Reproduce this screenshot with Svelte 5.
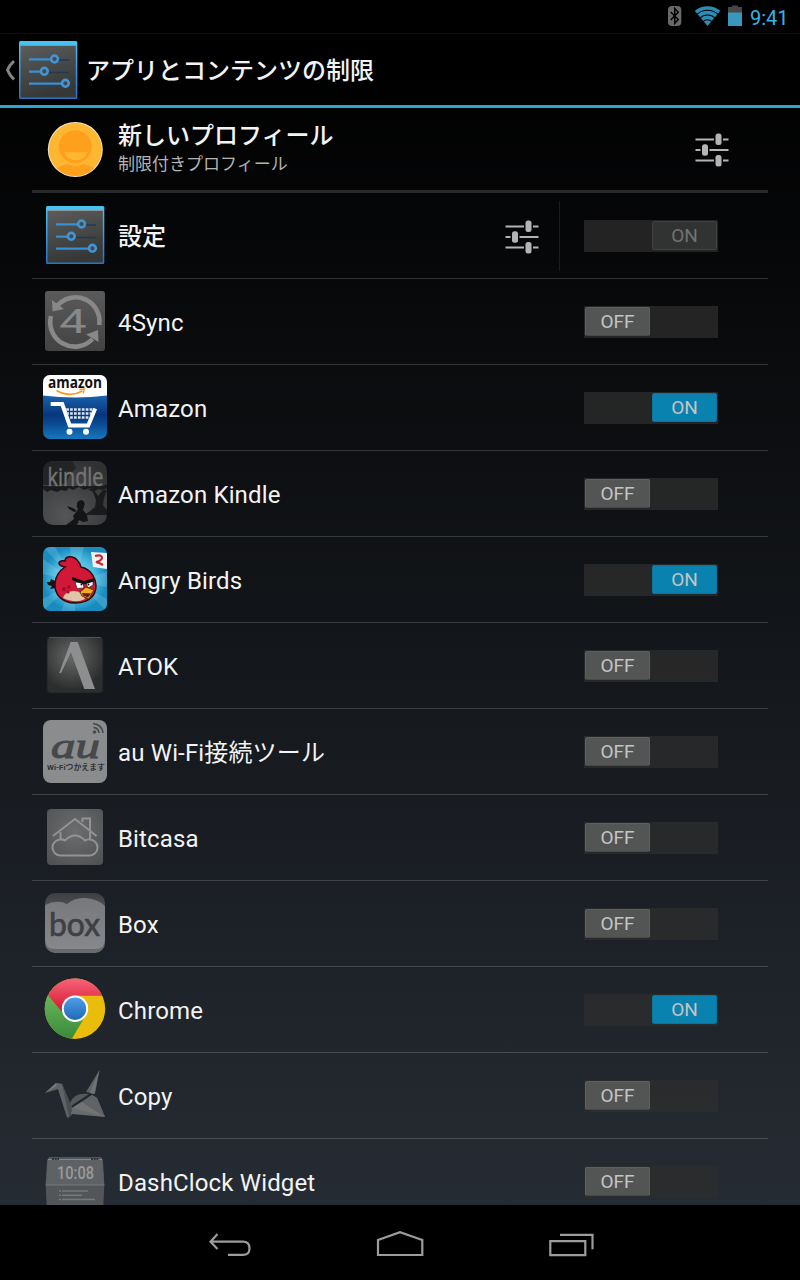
<script>
  let profileName = '新しいプロフィール';
  let profileType = '制限付きプロフィール';

  // Apps shown in the restriction list
  let apps = $state([
    { id: 'settings', name: '設定', on: true, locked: true },
    { id: 'foursync', name: '4Sync', on: false },
    { id: 'amazon', name: 'Amazon', on: true },
    { id: 'kindle', name: 'Amazon Kindle', on: false },
    { id: 'angry', name: 'Angry Birds', on: true },
    { id: 'atok', name: 'ATOK', on: false },
    { id: 'au', name: 'au Wi-Fi接続ツール', on: false },
    { id: 'bitcasa', name: 'Bitcasa', on: false },
    { id: 'box', name: 'Box', on: false },
    { id: 'chrome', name: 'Chrome', on: true },
    { id: 'copy', name: 'Copy', on: false },
    { id: 'dashclock', name: 'DashClock Widget', on: false }
  ]);

  function toggle(app) {
    if (!app.locked) {
      app.on = !app.on;
    }
  }
</script>

<style>
  :global(body) {
    background: #000;
  }

  .screen {
    width: 800px;
    height: 1280px;
    display: flex;
    flex-direction: column;
    overflow: hidden;
    background: linear-gradient(#000 0, #000 60px, #272d35 1240px);
    color: #f3f3f3;
    font-family: Roboto, 'Noto Sans CJK JP', sans-serif;
  }

  svg {
    display: block;
    flex: none;
    overflow: visible;
  }

  /* Status bar */
  .status {
    height: 33px;
    box-sizing: border-box;
    display: flex;
    justify-content: flex-end;
    padding: 4px 10px 0 0;
    background: #000;
    color: #33b5e5;
  }

  .time {
    font-size: 20px;
    line-height: 28px;
    width: 40px;
    margin-left: 8px;
    white-space: nowrap;
  }

  /* Action bar */
  .header {
    height: 75px;
    box-sizing: border-box;
    display: flex;
    align-items: center;
    border-top: 1px solid #0d0d0d;
    border-bottom: 3px solid #2ba6d3;
    padding-left: 5px;
  }

  .header h1 {
    margin: 0 0 0 6px;
    padding-top: 2px;
    font-size: 24px;
    font-weight: 500;
    line-height: 30px;
  }

  .list {
    flex: 1;
    min-height: 0;
    overflow: hidden;
    padding: 0 32px;
  }

  .profile,
  .row {
    display: flex;
    align-items: center;
    box-sizing: border-box;
    padding-left: 11px;
  }

  .profile {
    height: 85px;
    border-bottom: 3px solid #27292b;
    padding-right: 39px;
  }

  .profile-text {
    flex: 1;
    margin-left: 11px;
    padding-bottom: 2px;
  }

  .profile-name {
    font-size: 24px;
    font-weight: 500;
    line-height: 32px;
  }

  .profile-type {
    font-size: 17px;
    line-height: 24px;
    color: #b4b4b4;
  }

  .row {
    height: 86px;
    border-bottom: 1px solid rgba(255, 255, 255, 0.17);
    padding-right: 50px;
  }

  .row > svg {
    margin-bottom: 2px;
  }

  .name {
    flex: 1;
    margin-left: 11px;
    padding-top: 3px;
    font-size: 24px;
    line-height: 32px;
    letter-spacing: 0.15px;
    white-space: nowrap;
  }

  .japanese {
    font-weight: 500;
    letter-spacing: 0;
  }

  .gear {
    display: flex;
    align-items: center;
    height: 70px;
    padding-right: 20px;
    margin-right: 24px;
    border-right: 1px solid #1a1c1e;
  }

  .switch {
    width: 134px;
    height: 32px;
    box-sizing: border-box;
    display: flex;
    padding: 1px;
    border: none;
    background: rgba(46, 46, 46, 0.75);
    font: inherit;
  }

  .switch.on {
    justify-content: flex-end;
  }

  .thumb {
    width: 65px;
    height: 29px;
    box-sizing: border-box;
    border: 1px solid #5e5f60;
    border-bottom-color: #484949;
    border-radius: 2px;
    background: #535454;
    color: #c4c4c4;
    font-size: 19px;
    line-height: 28px;
    text-align: center;
  }

  .on .thumb {
    background: #0a82b0;
    border-color: #0f749b;
  }

  .locked .thumb {
    background: #313232;
    border: 1px solid #414242;
    color: #737373;
  }

  /* Navigation bar */
  .nav {
    height: 75px;
    display: flex;
    align-items: center;
    justify-content: center;
    gap: 106px;
    background: #000;
  }
</style>

{#snippet sliders()}
  <svg width="34" height="34" viewBox="0 0 34 34">
    <path d="M.5 7.500H19M28 7.500h5.500M.5 18h5M14.500 18h19M.5 28.500H19M28 28.500h5.500" stroke="#b4b4b4" stroke-width="2" />
    <rect x="20.500" y="1.500" width="6" height="11.500" rx="2.500" fill="#b4b4b4" />
    <rect x="7" y="12.300" width="6" height="11.500" rx="2.500" fill="#b4b4b4" />
    <rect x="20.500" y="23" width="6" height="11.500" rx="2.500" fill="#b4b4b4" />
  </svg>
{/snippet}

{#snippet settingsIcon()}
  <svg width="64" height="64" viewBox="0 0 64 64">
    <defs>
      <linearGradient id="setBody" x1="0" y1="0" x2="0.3" y2="1">
        <stop offset="0" stop-color="#5b5c5b" />
        <stop offset="1" stop-color="#363838" />
      </linearGradient>
      <linearGradient id="setEdge" x1="0" y1="0" x2="0" y2="1">
        <stop offset="0" stop-color="#49c4f5" />
        <stop offset="1" stop-color="#2673c4" />
      </linearGradient>
    </defs>
    <rect x="3" y="3" width="58.300" height="58" rx="1.500" fill="url(#setEdge)" />
    <rect x="4.500" y="7.500" width="55.300" height="52" fill="url(#setBody)" />
    <path d="M4.500 7.500h55.300" stroke="#8d9598" stroke-width="1" />
    <path d="M40 22h13M30 34.500h23" stroke="#213a50" stroke-width="1.500" />
    <path d="M13 21.300h22M13 33.700h12M13 45.700h32" stroke="#3790d2" stroke-width="2.200" />
    <g fill="#43494d" stroke="#4294d3" stroke-width="2.600">
      <circle cx="38.500" cy="21" r="3.400" />
      <circle cx="28.300" cy="33.300" r="3.400" />
      <circle cx="49.400" cy="45.300" r="3.400" />
    </g>
  </svg>
{/snippet}

{#snippet appIcon(id)}
  <svg width="64" height="64" viewBox="0 0 64 64">
    {#if id === 'foursync'}
      <linearGradient id="syncBg" x1="0" y1="0" x2="0" y2="1">
        <stop offset="0" stop-color="#5a5a5a" />
        <stop offset="1" stop-color="#434343" />
      </linearGradient>
      <rect x="2" y="2" width="60" height="60" rx="3" fill="url(#syncBg)" />
      <g fill="none" stroke="#888" stroke-width="4.600">
        <path d="M14 17A24 24 0 0 1 56.200 36" />
        <path d="M8 27A24.500 24.500 0 0 0 49.500 50" />
      </g>
      <path d="M9 11l.5 11.500 11.500-2.500zM43 45.500l12-4.500 .5 12z" fill="#888" />
      <text transform="translate(16 43.500) scale(1.450 1)" font-size="34" font-weight="400" fill="#888">4</text>
    {:else if id === 'amazon'}
      <defs>
        <linearGradient id="amzBg" x1="0" y1="0" x2="0" y2="1">
          <stop offset="0.3" stop-color="#1c66ae" />
          <stop offset="0.62" stop-color="#07367d" />
          <stop offset="0.76" stop-color="#0a4a91" />
          <stop offset="1" stop-color="#1877bd" />
        </linearGradient>
        <clipPath id="amzClip"><rect width="64" height="64" rx="7" /></clipPath>
      </defs>
      <g clip-path="url(#amzClip)">
        <rect width="64" height="64" fill="url(#amzBg)" />
        <path d="M0 0h64v20.500q-32 4-64 0z" fill="#fff" />
      </g>
      <text x="5" y="13.300" font-family="'Open Sans', sans-serif" font-size="16" font-weight="700" textLength="54" lengthAdjust="spacingAndGlyphs" fill="#111">amazon</text>
      <path d="M13.500 15.500q13 7.500 26 .5" fill="none" stroke="#f59a1c" stroke-width="1.600" />
      <path d="M36.500 14.500l5-.5-1.500 4.500" fill="none" stroke="#f59a1c" stroke-width="1.300" />
      <path d="M7.700 29h11.500l7.500 21.500h18.500l7-17" fill="none" stroke="#fff" stroke-width="4" />
      <path d="M23.200 34.500h27M23.200 38.500h25M27.100 42.500h19.500" stroke="#dce7f3" stroke-width="2.600" stroke-dasharray="2.700 1.200" />
      <circle cx="26.500" cy="56.700" r="3" fill="#fff" />
      <circle cx="43" cy="56.700" r="3" fill="#fff" />
    {:else if id === 'kindle'}
      <defs>
        <radialGradient id="kinBg" cx="0.35" cy="0.85" r="0.9">
          <stop offset="0" stop-color="#555657" />
          <stop offset="1" stop-color="#303132" />
        </radialGradient>
        <clipPath id="kinClip"><rect width="64" height="64" rx="10" /></clipPath>
      </defs>
      <g clip-path="url(#kinClip)">
        <rect width="64" height="64" fill="url(#kinBg)" />
        <path d="M0 0h29l4 7-6 6-4 9-8 2H0z" fill="#232425" />
        <path d="M0 25h60l4-2v4l-4 2-5-1-3 2-6-3-5 2-5-3-6 3-4-2-3 3-5-1-4 2-6-2-4 2-4-3-4-1z" fill="#1a1b1c" />
        <path d="M43 27l7 4 3 8-1 7-6 5-5 3h23V49l-4-5 1-7 3-8h-4l-5 6-4-6z" fill="#1a1b1c" />
        <path d="M23 64l8-6-1-3 4-5-3 1-5-3-2-3 6 2 4 3 1-2-1-2q-1-6 4-7 5 1 3 7l-1 3 4 5 1 6-5 1-4-2-2 5z" fill="#141516" />
      </g>
      <text x="4.500" y="24.500" font-size="25" font-family="'Open Sans', sans-serif" textLength="56" lengthAdjust="spacingAndGlyphs" fill="#737475" stroke="#737475" stroke-width="0.500">kindle</text>
    {:else if id === 'angry'}
      <defs>
        <radialGradient id="birdBg">
          <stop offset="0" stop-color="#b5e9f5" />
          <stop offset="0.65" stop-color="#49b9df" />
          <stop offset="1" stop-color="#1a8bbf" />
        </radialGradient>
        <clipPath id="birdClip"><rect width="64" height="64" rx="7" /></clipPath>
      </defs>
      <g clip-path="url(#birdClip)">
        <rect width="64" height="64" fill="url(#birdBg)" />
        <path d="M32 34L0 12v15zM32 34L12 0H0zM32 34L27 0h14zM32 34L64 25v15zM32 34L64 64V52zM32 34L18 64h14zM32 34L0 52v12z" fill="#c2effa" opacity="0.18" />
        <path d="M48 5l16 1v16l-14-2z" fill="#f2f2f2" />
        <path d="M52 9q7-2 7 2-1 3-6 4 4 1 7 3" fill="none" stroke="#c62536" stroke-width="2.200" />
      </g>
      <path d="M14 35l-6-3-1 3-3 0 1 3 4 1-2 3 6-1z" fill="#151515" />
      <path d="M22 20q-6-1-6-4 1-3 6-2 0-5 7-4 6 1 9 10 10 2 14 13c4 14-5 23-20 23C19 56 11 47 12 36q1-10 10-16z" fill="#d21737" stroke="#2e0810" stroke-width="1.500" />
      <path d="M20 51q2-7 11-7 8 0 11 8-9 5-22-1z" fill="#dfc4a8" />
      <g fill="#9e1029">
        <circle cx="21" cy="42" r="2" />
        <circle cx="26" cy="40" r="1.800" />
        <circle cx="25" cy="45" r="1.600" />
      </g>
      <path d="M32 35l8 1 1 5-7 .5zM43 36l7-2v4l-5 3z" fill="#fff" stroke="#222" stroke-width="0.700" />
      <path d="M29 30l12 4 10-3v3.500l-10 3-12-4.500z" fill="#111" />
      <circle cx="38.500" cy="37.500" r="1" fill="#111" />
      <circle cx="45.500" cy="37.500" r="1" fill="#111" />
      <path d="M37 45l6-5 8 3-2 3-3 6-7-3z" fill="#f4a91e" stroke="#4e2b09" stroke-width="0.900" />
      <path d="M39 46l9 .5-3 4-5-2z" fill="#6b1d14" />
    {:else if id === 'atok'}
      <radialGradient id="atokBg" cx="0.45" cy="0.35" r="0.6">
        <stop offset="0" stop-color="#686868" />
        <stop offset="1" stop-color="#2c2d2d" />
      </radialGradient>
      <rect x="4" y="4" width="56" height="56" rx="4" fill="url(#atokBg)" stroke="#202122" stroke-width="0.800" />
      <path d="M6 4.500h52" stroke="#505152" />
      <path d="M27.700 9h7L52 56H41.300L28 19.500 18 40h-1.800z" fill="#8d8e8f" />
    {:else if id === 'au'}
      <rect y="1" width="64" height="63" rx="8" fill="#8b8c8e" />
      <text transform="translate(8 38.500) scale(1.360 1)" font-family="'Liberation Serif', serif" font-size="36" font-style="italic" fill="#47484a" stroke="#47484a" stroke-width="1">au</text>
      <text x="4" y="51" font-size="7.500" font-weight="700" textLength="58" lengthAdjust="spacingAndGlyphs" fill="#333436">Wi-Fiつかえます</text>
      <circle cx="51.500" cy="13" r="1.800" fill="#47484a" />
      <path d="M50.500 8.500q5 .5 5.500 5.500M50 4.500q9 1 10 9.500" fill="none" stroke="#47484a" stroke-width="1.600" />
    {:else if id === 'bitcasa'}
      <radialGradient id="bitBg" cx="0.5" cy="0.4" r="0.7">
        <stop offset="0" stop-color="#6c6d6e" />
        <stop offset="1" stop-color="#505253" />
      </radialGradient>
      <rect x="4" y="4" width="56" height="56" rx="4" fill="url(#bitBg)" />
      <g fill="none" stroke="#929394" stroke-width="2">
        <path d="M10 31L32 14l21.500 17" />
        <path d="M39.500 17v-3.500h7.500V25M17.500 27v7M47 27v7" />
        <path d="M18 50.500a8 8 0 0 1-1-16q3-.5 5 1 10-10 20 0 3-1.500 5-1a8 8 0 0 1-1 16z" />
      </g>
    {:else if id === 'box'}
      <defs>
        <linearGradient id="boxBg" x1="0" y1="0" x2="0" y2="1">
          <stop offset="0" stop-color="#3d3e40" />
          <stop offset="0.4" stop-color="#5b5c5e" />
          <stop offset="1" stop-color="#696a6c" />
        </linearGradient>
        <linearGradient id="boxCloud" x1="0" y1="0" x2="0" y2="1">
          <stop offset="0" stop-color="#77787b" />
          <stop offset="1" stop-color="#87888b" />
        </linearGradient>
      </defs>
      <rect x="2" y="2" width="60" height="60" rx="10" fill="url(#boxBg)" />
      <path d="M2 14q12-6 22-1 8-7 19-6 12 1 19 8v33q0 10-10 10H12Q2 58 2 48z" fill="url(#boxCloud)" />
      <text x="6" y="45" font-family="Lato, sans-serif" font-size="33" font-weight="400" textLength="51" lengthAdjust="spacingAndGlyphs" fill="#3d4044" stroke="#3d4044" stroke-width="0.700" stroke-linejoin="round">box</text>
    {:else if id === 'chrome'}
      <defs>
        <linearGradient id="chRed" x1="0" y1="0" x2="0" y2="1">
          <stop offset="0" stop-color="#f7647b" />
          <stop offset="1" stop-color="#d3122a" />
        </linearGradient>
        <linearGradient id="chBlue" x1="0" y1="0" x2="0" y2="1">
          <stop offset="0" stop-color="#4f9ee6" />
          <stop offset="1" stop-color="#2069b8" />
        </linearGradient>
        <linearGradient id="chGreen" x1="0" y1="0" x2="0" y2="1">
          <stop offset="0" stop-color="#69b557" />
          <stop offset="1" stop-color="#3a8a3d" />
        </linearGradient>
      </defs>
      <circle cx="32" cy="31.700" r="30.200" fill="#e9bd0a" />
      <path d="M5 18A30.200 30.200 0 0 0 28.800 61.700L43 38 32 31.700z" fill="url(#chGreen)" />
      <path d="M5 18.200A30.200 30.200 0 0 1 59.300 18.700H32L20 36z" fill="url(#chRed)" />
      <circle cx="32" cy="31.700" r="13.200" fill="#fff" />
      <circle cx="32" cy="31.700" r="11.200" fill="url(#chBlue)" />
    {:else if id === 'copy'}
      <path d="M2 30l11-10 6 1-3 5z" fill="#5d5f61" />
      <path d="M2 30l11-10 1 3z" fill="#77797a" />
      <path d="M13 20l6 1 10 24-3 9.500h-2z" fill="#606365" />
      <path d="M19 21l10 23-3 10z" fill="#4b4e51" />
      <path d="M27 40q4-11 19-9l-18 12z" fill="#55585b" />
      <path d="M43 29L56.500 7 52 31z" fill="#606365" />
      <path d="M51 31L56.500 7 47 30z" fill="#717375" />
      <path d="M29 45l20-13 5 3 8 19-33-3-2 3z" fill="#67696b" />
      <path d="M29 45l10-6 23 15z" fill="#717375" />
      <path d="M49 32l5 3 8 19-23-15z" fill="#606365" />
    {:else if id === 'dashclock'}
      <path d="M6 8h52l2 3 1.300 25L60 64H4L2.700 36 4 11z" fill="#535658" />
      <path d="M5 11h54l2.300 25H2.700z" fill="#5f6264" />
      <path d="M5 10.500h54" stroke="#858789" stroke-width="1" />
      <path d="M9 10h7M48 10h8" stroke="#303335" stroke-width="2" stroke-dasharray="2 .7" />
      <path d="M2.700 36h58.600" stroke="#777a7c" stroke-width="1" />
      <text x="14" y="30" font-size="18" font-weight="500" textLength="37" lengthAdjust="spacingAndGlyphs" fill="#989a9c">10:08</text>
      <path d="M16 42h2M19 42h26M16 46.300h2M19 46.300h20M16 50.600h2M19 50.600h33" stroke="#77797b" stroke-width="1.500" />
    {/if}
  </svg>
{/snippet}

<div class="screen">
  <div class="status">
    <svg width="75" height="24" viewBox="0 0 75 24">
      <rect x="1" y="2" width="13.300" height="20" rx="4" fill="#696969" />
      <path d="M3.700 8l7.500 7.500-3.500 3.800V4.500l3.500 3.800L3.700 16" fill="none" stroke="#000" stroke-width="1.500" />
      <clipPath id="fan"><path d="M40.500 22L27 6q13.500-9 27 0z" /></clipPath>
      <g clip-path="url(#fan)" fill="none" stroke="#2a8db5" stroke-width="3.700">
        <circle cx="40.500" cy="22" r="18" />
        <circle cx="40.500" cy="22" r="13.300" />
        <circle cx="40.500" cy="22" r="8.600" />
        <circle cx="40.500" cy="22" r="2.900" stroke-width="5.800" />
      </g>
      <path d="M61 3h4V1.500h6V3h4v6H61z" fill="#474747" />
      <path d="M61 8.500h14V22H61z" fill="#3997bd" />
    </svg>
    <span class="time">9:41</span>
  </div>

  <div class="header">
    <svg width="11" height="24" viewBox="0 0 11 24">
      <path d="M9 3Q4.500 7 2.500 12 4.500 17 9 21.500" fill="none" stroke="#858585" stroke-width="3" />
    </svg>
    {@render settingsIcon()}
    <h1>アプリとコンテンツの制限</h1>
  </div>

  <div class="list">
    <div class="profile">
      <svg width="64" height="64" viewBox="0 0 64 64">
        <clipPath id="face"><circle cx="32.300" cy="32.500" r="26.500" /></clipPath>
        <circle cx="32.300" cy="32.500" r="27.500" fill="#f6e3c3" />
        <g clip-path="url(#face)">
          <rect width="64" height="64" fill="#ffb732" />
          <circle cx="32.300" cy="29.700" r="16.500" fill="#ffa01c" />
          <path d="M12 53q7-6 13-6 7.500 4 15 0 7 1 13 6v11H12z" fill="#ffa01c" />
          <path d="M21.500 35.300h23q-3 8-11.500 8t-11.500-8z" fill="#ffb732" />
        </g>
      </svg>
      <div class="profile-text">
        <div class="profile-name">{profileName}</div>
        <div class="profile-type">{profileType}</div>
      </div>
      {@render sliders()}
    </div>

    {#each apps as app (app.id)}
      <div class="row">
        {#if app.id === 'settings'}
          {@render settingsIcon()}
        {:else}
          {@render appIcon(app.id)}
        {/if}
        <div class="name" class:japanese={app.id === 'settings'}>{app.name}</div>
        {#if app.locked}
          <div class="gear">{@render sliders()}</div>
        {/if}
        <button class="switch" class:on={app.on} class:locked={app.locked} onclick={() => toggle(app)}>
          <span class="thumb">{app.on ? 'ON' : 'OFF'}</span>
        </button>
      </div>
    {/each}
  </div>

  <div class="nav">
    <svg width="64" height="40" viewBox="0 0 64 40" fill="none" stroke="#9c9c9c" stroke-width="2.200">
      <path d="M19.500 11L12.500 18.700l7 7.300M12 18.700h33q6.500 0 6.500 6.600T45 31.900H30" />
    </svg>
    <svg width="64" height="40" viewBox="0 0 64 40" fill="none" stroke="#9c9c9c" stroke-width="2.200">
      <path d="M10 32V17l22-7.800L54.300 17v15z" />
    </svg>
    <svg width="64" height="40" viewBox="0 0 64 40" fill="none" stroke="#9c9c9c" stroke-width="2.200">
      <path d="M12.300 18.200h35v14h-35zM22 11.800h32.500v14.500" />
    </svg>
  </div>
</div>
